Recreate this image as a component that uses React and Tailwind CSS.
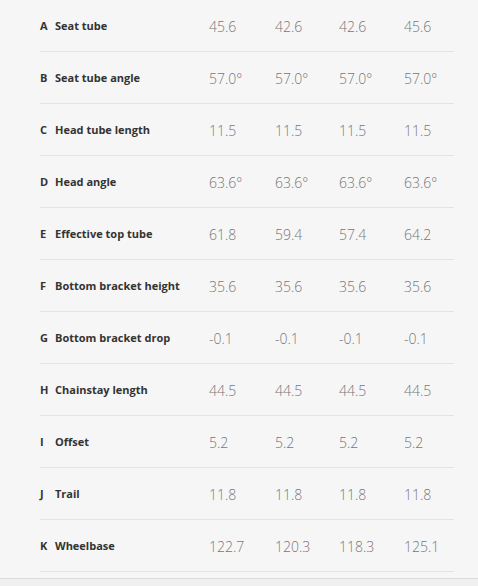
import React from 'react';

const rows = [
  ['A', 'Seat tube', ['45.6', '42.6', '42.6', '45.6']],
  ['B', 'Seat tube angle', ['57.0°', '57.0°', '57.0°', '57.0°']],
  ['C', 'Head tube length', ['11.5', '11.5', '11.5', '11.5']],
  ['D', 'Head angle', ['63.6°', '63.6°', '63.6°', '63.6°']],
  ['E', 'Effective top tube', ['61.8', '59.4', '57.4', '64.2']],
  ['F', 'Bottom bracket height', ['35.6', '35.6', '35.6', '35.6']],
  ['G', 'Bottom bracket drop', ['-0.1', '-0.1', '-0.1', '-0.1']],
  ['H', 'Chainstay length', ['44.5', '44.5', '44.5', '44.5']],
  ['I', 'Offset', ['5.2', '5.2', '5.2', '5.2']],
  ['J', 'Trail', ['11.8', '11.8', '11.8', '11.8']],
  ['K', 'Wheelbase', ['122.7', '120.3', '118.3', '125.1']],
];

export default function App() {
  return (
    <div className="w-[478px] h-[586px] bg-[#f6f6f6] flex flex-col" style={{ fontFamily: '"Open Sans", sans-serif' }}>
      <div className="pl-[40px] w-[454px]">
        {rows.map(([letter, label, vals]) => (
          <div
            key={letter}
            className="grid grid-cols-[15px_154px_66px_64px_65px_1fr] items-center h-[52px] pt-[2px] border-b border-[#e4e4e4]"
          >
            <span className="text-[11px] font-bold text-[#333]">{letter}</span>
            <span className="text-[11px] font-bold text-[#333]">{label}</span>
            {vals.map((v, i) => (
              <span key={i} className="text-[14px] font-light text-[#777]">{v}</span>
            ))}
          </div>
        ))}
      </div>
      <div className="mt-[6px] border-t border-[#dcdcdc] bg-[#f0f0f0] flex-1" />
    </div>
  );
}
